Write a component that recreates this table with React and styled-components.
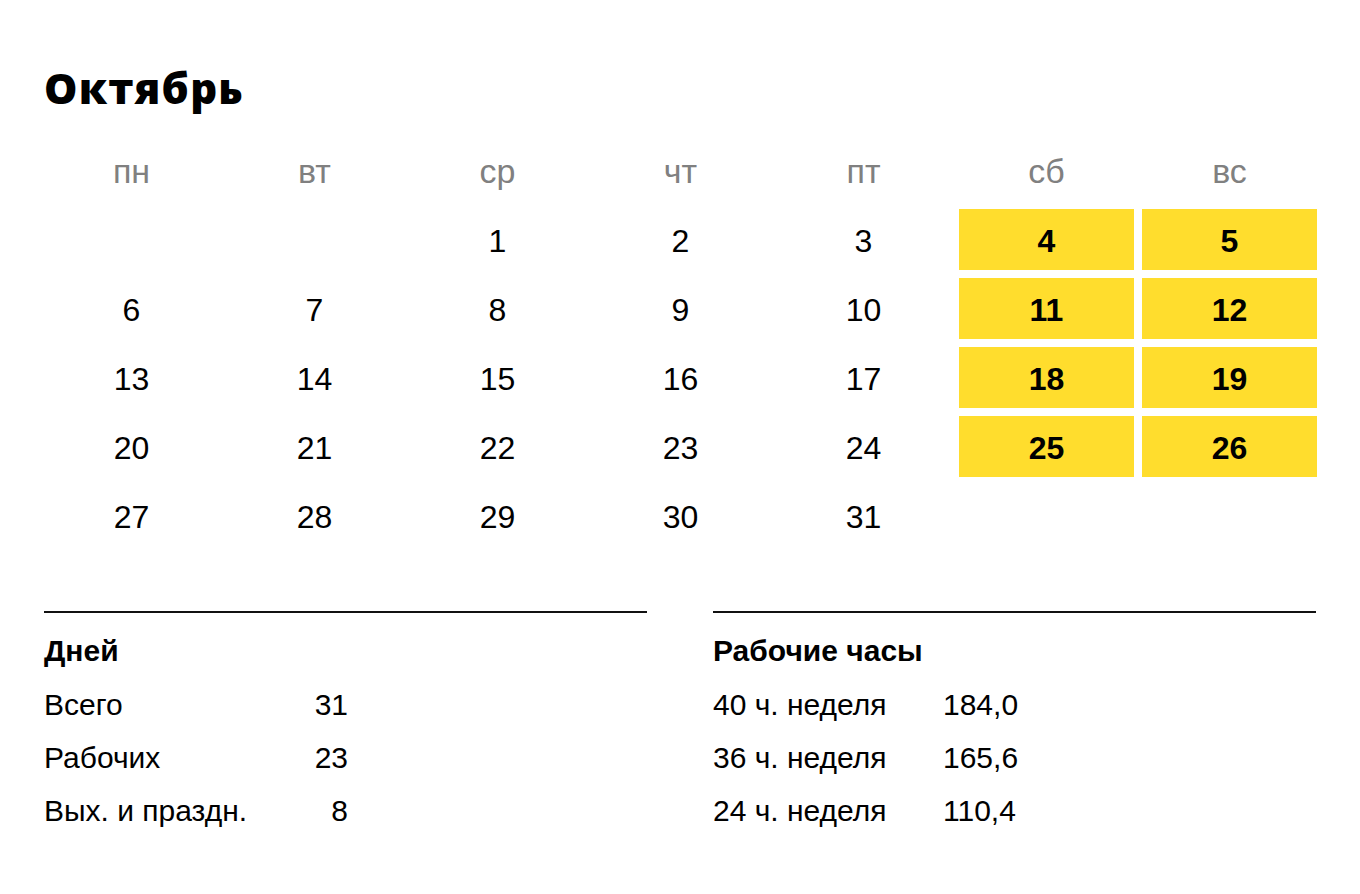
import styled, { createGlobalStyle } from 'styled-components';

const GlobalStyle = createGlobalStyle`
  html, body {
    margin: 0;
    padding: 0;
    background: #ffffff;
  }
  body {
    font-family: "Liberation Sans", Arial, sans-serif;
    color: #000000;
  }
`;

const WEEKDAYS = ['пн', 'вт', 'ср', 'чт', 'пт', 'сб', 'вс'];
const OFFSET = 2;
const DAYS_IN_MONTH = 31;

const buildCells = () => {
  const cells = [];
  for (let i = 0; i < OFFSET; i++) cells.push(null);
  for (let d = 1; d <= DAYS_IN_MONTH; d++) cells.push(d);
  return cells;
};

const dayStats = [
  { label: 'Всего', value: '31' },
  { label: 'Рабочих', value: '23' },
  { label: 'Вых. и праздн.', value: '8' },
];

const hourStats = [
  { label: '40 ч. неделя', value: '184,0' },
  { label: '36 ч. неделя', value: '165,6' },
  { label: '24 ч. неделя', value: '110,4' },
];

function App() {
  const cells = buildCells();

  return (
    <Page>
      <GlobalStyle />
      <Title>Октябрь</Title>
      <WeekHeader>
        {WEEKDAYS.map((w) => (
          <WeekDay key={w}>{w}</WeekDay>
        ))}
      </WeekHeader>
      <DaysGrid>
        {cells.map((day, i) => {
          const weekend = i % 7 >= 5;
          return (
            <DayCell key={i} $weekend={weekend && day !== null}>
              {day}
            </DayCell>
          );
        })}
      </DaysGrid>
      <Summary>
        <StatBlock>
          <StatTitle>Дней</StatTitle>
          {dayStats.map((s) => (
            <StatRow key={s.label} $labelWidth="254px">
              <span>{s.label}</span>
              <StatValue $align="right">{s.value}</StatValue>
            </StatRow>
          ))}
        </StatBlock>
        <StatBlock>
          <StatTitle>Рабочие часы</StatTitle>
          {hourStats.map((s) => (
            <StatRow key={s.label} $labelWidth="230px">
              <span>{s.label}</span>
              <StatValue>{s.value}</StatValue>
            </StatRow>
          ))}
        </StatBlock>
      </Summary>
    </Page>
  );
}

export default App;

const Page = styled.div`
  padding: 64px 44px 40px;
  width: 1272px;
`;

const Title = styled.h1`
  margin: 0;
  font-family: "Open Sans", "Liberation Sans", sans-serif;
  font-weight: 800;
  font-size: 42px;
  line-height: 48px;
  letter-spacing: 1.2px;
`;

const WeekHeader = styled.div`
  display: grid;
  grid-template-columns: repeat(7, 175px);
  column-gap: 8px;
  margin-top: 39px;
  margin-bottom: 18px;
`;

const WeekDay = styled.div`
  height: 40px;
  display: flex;
  align-items: center;
  justify-content: center;
  font-size: 34px;
  color: #808080;
`;

const DaysGrid = styled.div`
  display: grid;
  grid-template-columns: repeat(7, 175px);
  grid-auto-rows: 61px;
  gap: 8px;
`;

const DayCell = styled.div`
  display: flex;
  align-items: center;
  justify-content: center;
  padding-top: 3px;
  font-size: 32px;
  font-weight: ${(p) => (p.$weekend ? 700 : 400)};
  background: ${(p) => (p.$weekend ? '#ffdd2d' : 'transparent')};
`;

const Summary = styled.div`
  display: grid;
  grid-template-columns: 603px 603px;
  column-gap: 66px;
  margin-top: 65px;
`;

const StatBlock = styled.div`
  border-top: 2px solid #111111;
  display: flex;
  flex-direction: column;
`;

const StatTitle = styled.div`
  margin-top: 23px;
  height: 30px;
  line-height: 30px;
  font-size: 30px;
  font-weight: 700;
`;

const StatRow = styled.div`
  display: grid;
  grid-template-columns: ${(p) => p.$labelWidth} 50px;
  height: 53px;
  align-items: center;
  font-size: 30px;

  &:nth-child(2) {
    margin-top: 12px;
  }
`;

const StatValue = styled.span`
  text-align: ${(p) => p.$align || 'left'};
  white-space: nowrap;
`;
